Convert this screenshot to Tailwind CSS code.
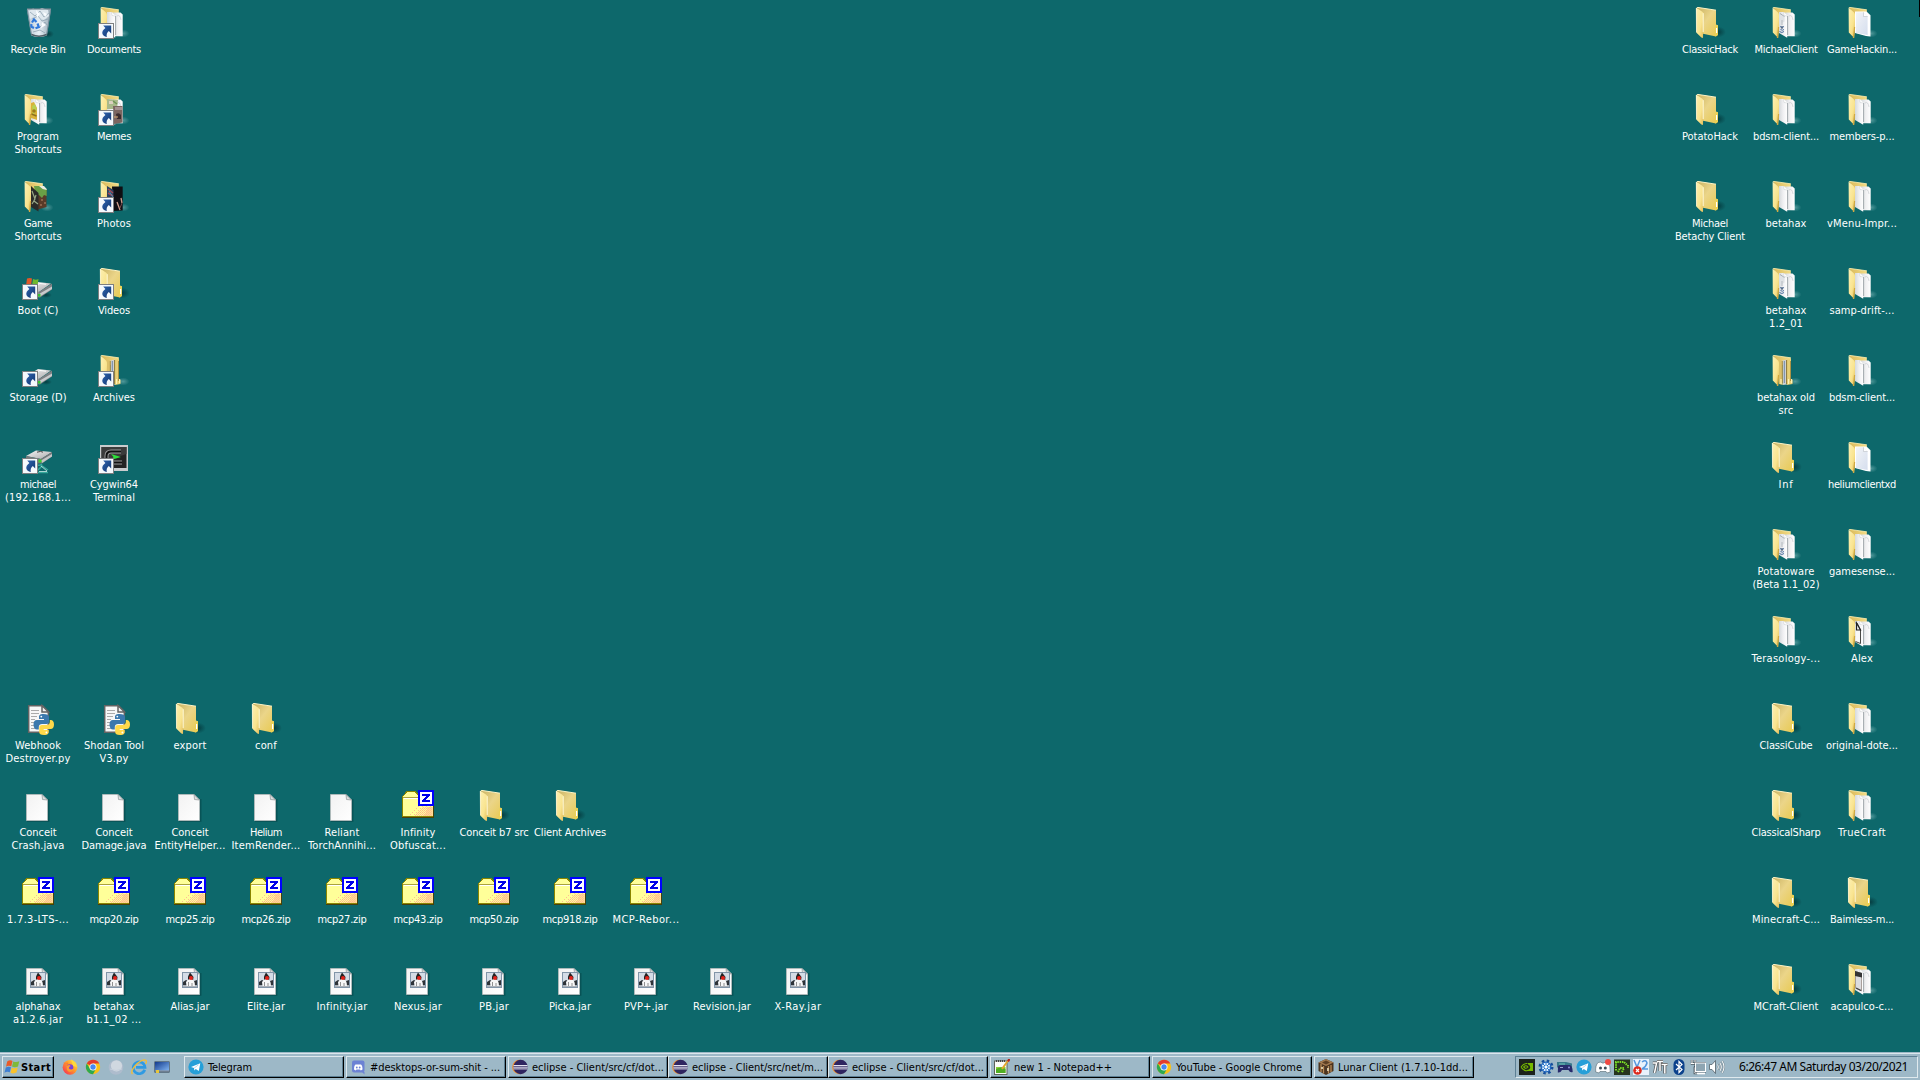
<!DOCTYPE html>
<html lang="en">
<head>
<meta charset="utf-8">
<title>Desktop</title>
<script src="https://cdn.jsdelivr.net/npm/@tailwindcss/browser@4"></script>
</head>
<body class="w-[1920px] h-[1080px] overflow-hidden bg-[#0d686b] font-['DejaVu_Sans_Condensed','DejaVu_Sans',sans-serif] text-[11px] leading-[13px] flex flex-col relative">

<svg width="0" height="0" class="absolute">
  <defs>
    <linearGradient id="gFlap" x1="0" y1="0" x2="1" y2="1"><stop offset="0" stop-color="#fdf0b4"/><stop offset=".6" stop-color="#f9e48f"/><stop offset="1" stop-color="#dfb955"/></linearGradient>
    <linearGradient id="gBack" x1="0" y1="0" x2="1" y2="1"><stop offset="0" stop-color="#c9b263"/><stop offset=".45" stop-color="#ebd589"/><stop offset="1" stop-color="#e8c94f"/></linearGradient>
    <linearGradient id="gTop" x1="0" y1="0" x2="1" y2="0"><stop offset="0" stop-color="#d9b85a"/><stop offset="1" stop-color="#f3dc86"/></linearGradient>
    <linearGradient id="gPaper" x1="0" y1="0" x2="1" y2="0"><stop offset="0" stop-color="#d5d9dc"/><stop offset=".5" stop-color="#f0f0f2"/><stop offset="1" stop-color="#ffffff"/></linearGradient>
    <linearGradient id="gBlue" x1="0" y1="0" x2="1" y2="1"><stop offset="0" stop-color="#f2f4f7"/><stop offset="1" stop-color="#d5deee"/></linearGradient>
    <linearGradient id="gDoc" x1="0" y1="0" x2="1" y2="1"><stop offset="0" stop-color="#f2f2f2"/><stop offset="1" stop-color="#ffffff"/></linearGradient>
    <radialGradient id="gShade"><stop offset="0" stop-color="#022f33" stop-opacity=".75"/><stop offset="1" stop-color="#022f33" stop-opacity="0"/></radialGradient>
    <radialGradient id="gGlow"><stop offset="0" stop-color="#7fb7b8" stop-opacity=".6"/><stop offset="1" stop-color="#7fb7b8" stop-opacity="0"/></radialGradient>
    <linearGradient id="gDrive" x1="0" y1="0" x2="1" y2="1"><stop offset="0" stop-color="#f4f4f4"/><stop offset="1" stop-color="#a9a9ab"/></linearGradient>
    <linearGradient id="gBin" x1="0" y1="0" x2="1" y2="0"><stop offset="0" stop-color="#b7c6d1"/><stop offset=".5" stop-color="#e6eff5"/><stop offset="1" stop-color="#93a6b2"/></linearGradient>
    <linearGradient id="gArrow" x1="0" y1="0" x2="1" y2="1"><stop offset="0" stop-color="#2d62ad"/><stop offset="1" stop-color="#12366f"/></linearGradient>
    <pattern id="pDither" width="2" height="2" patternUnits="userSpaceOnUse"><rect width="1" height="1" fill="#ffb78c"/><rect x="1" y="1" width="1" height="1" fill="#ffc29a"/></pattern>
    <pattern id="pDither2" width="4" height="4" patternUnits="userSpaceOnUse"><rect width="1" height="1" fill="#ffbf92"/><rect x="2" y="2" width="1" height="1" fill="#ffbf92"/></pattern>
    <linearGradient id="gFox" x1="1" y1="0" x2="0" y2="1"><stop offset="0" stop-color="#fff04a"/><stop offset=".45" stop-color="#ff9a2b"/><stop offset="1" stop-color="#f5205a"/></linearGradient>
    <linearGradient id="gScreen" x1="0" y1="0" x2="1" y2="1"><stop offset="0" stop-color="#123a8c"/><stop offset="1" stop-color="#7fb3f0"/></linearGradient>

    <symbol id="folder" viewBox="0 0 32 32">
      <ellipse cx="24" cy="25" rx="8" ry="5.5" fill="url(#gShade)"/>
      <path d="M3 0.3 L22 3.2 V17.5 L24 18.3 V28 L22 29.6 L9 26.8Z" fill="url(#gBack)"/>
      <path d="M3 0.3 L22 3.2" stroke="#fdf3c4" stroke-width="1"/>
      <path d="M21.5 18 L23.8 18.6 V28 L21 29.4Z" fill="#ecd254"/><path d="M22.6 21v5" stroke="#fff" stroke-width="1.2"/>
      <path d="M2 0.5 L8.6 5 Q9.8 6 9.6 8 L9 31 L7.4 30.6 L2.2 25.5Z" fill="url(#gFlap)"/>
      <path d="M2.3 1 L2.5 25" stroke="#fff8df" stroke-width=".8" opacity=".8"/>
      <path d="M9.2 6.2 V25" stroke="#fffbe0" stroke-width=".9"/>
    </symbol>
    <symbol id="openbase" viewBox="0 0 32 32">
      <ellipse cx="25" cy="26.5" rx="6.5" ry="4" fill="url(#gGlow)"/>
      <path d="M3 0.2 L20.8 2.7 V10 H9Z" fill="url(#gTop)"/><path d="M3 .3 L20.8 2.8" stroke="#fff0b0" stroke-width=".8"/>
    </symbol>
    <symbol id="openflap" viewBox="0 0 32 32">
      <path d="M2.6 0.5 L8 5.5 Q9.2 6.8 9 9 V20 L8.2 31 L2.8 25.5Z" fill="url(#gFlap)"/>
      <path d="M7.4 31 L8.6 20" stroke="#d3a93f" stroke-width="1.2"/>
    </symbol>
    <symbol id="papers" viewBox="0 0 32 32">
      <path d="M15 5.4 H22.5 L24.7 7.6 V29.3 H17Z" fill="url(#gPaper)"/>
      <path d="M9 5 L14 5 L17.2 8.5 V30.8 L9 26Z" fill="url(#gPaper)"/>
      <path d="M17.6 9 V28" stroke="#a3a9ad" stroke-width="1"/><path d="M13.5 5 L14 8.5 L17 9" fill="#fff" stroke="#c6cacc" stroke-width=".5"/>
      <path d="M19 9 Q22 7 23 13" stroke="#c9ccd0" stroke-width=".7" fill="none"/>
    </symbol>
    <symbol id="open" viewBox="0 0 32 32"><use href="#openbase"/><use href="#papers"/><use href="#openflap"/></symbol>
    <symbol id="openpage" viewBox="0 0 32 32"><use href="#openbase"/>
      <path d="M9 4.5 L20.5 4.5 L24.5 8.3 V29.5 L20 29 L9 26Z" fill="#fff"/><path d="M10 5.3 H17.5 L21.6 9.5 V28 L10 26Z" fill="url(#gBlue)"/><path d="M17.5 5.3 V9.5 H21.6" fill="#fff" stroke="#b8bdc4" stroke-width=".6"/>
      <use href="#openflap"/></symbol>
    <symbol id="openjava" viewBox="0 0 32 32"><use href="#openbase"/><use href="#papers"/>
      <path d="M9.5 7 l5 2.500 v5 l-5 3z" fill="#dfe2e5"/><path d="M10 6.500l4.500 3" stroke="#9aa2a8" stroke-width=".8"/><path d="M12 13v5" stroke="#aab1b8" stroke-width=".8"/><path d="M10 19.500 l2 1 l2-1 M10.500 22.500 q2 1.500 3.500 0 M9.500 24.500 q2.500 2 4.500 0" stroke="#4a6f9f" stroke-width="1" fill="none"/><path d="M12 19v3" stroke="#3d4f66" stroke-width="1"/>
      <use href="#openflap"/></symbol>
    <symbol id="openblack" viewBox="0 0 32 32"><use href="#openbase"/><use href="#papers"/>
      <path d="M9.500 7 L11 7 L14.500 14 V27.500 L9.500 25.500" fill="#f8f8f8" stroke="#4a4a46" stroke-width="1"/><path d="M10.500 7 V14 H14.500Z" fill="#eee" stroke="#222" stroke-width="1.200"/>
      <use href="#openflap"/></symbol>
    <symbol id="openphone" viewBox="0 0 32 32"><use href="#openbase"/><use href="#papers"/>
      <path d="M9.500 7.500 L15.500 9.500 V27 L9.500 24Z" fill="#dcdcdf" stroke="#8c7f78" stroke-width=".7"/><path d="M9 7 L16 9 V13.500 L9 12Z" fill="#343434"/><path d="M10 24 l5 2.500" stroke="#444" stroke-width="1.300"/>
      <use href="#openflap"/></symbol>
    <symbol id="openarch" viewBox="0 0 32 32"><use href="#openbase"/>
      <path d="M17 5 L21 4 V24 L22.500 25 V29 L17 30Z" fill="#e8cf74"/><path d="M12.500 5.500 L17 4.500 V29.500 L12.500 30Z" fill="#cfd2d0"/><path d="M14.300 6v22" stroke="#6f88a8" stroke-width="1"/><path d="M16.600 5v24" stroke="#8a7532" stroke-width="1"/>
      <path d="M9 5 L12.500 6 V30 L9 29Z" fill="#dcc06a"/><path d="M12.300 6v22M20.500 6v20" stroke="#9c8338" stroke-width=".8"/><path d="M11 24v5M18.500 24v5M21.600 24v4" stroke="#fff3b8" stroke-width="1.200"/>
      <use href="#openflap"/></symbol>
    <symbol id="openprog" viewBox="0 0 32 32"><use href="#openbase"/><use href="#papers"/>
      <path d="M9 9 L12 8 L15 14 V26 L9 24Z" fill="#d9b23a"/><path d="M10 12l3-2 2 6-4 5z" fill="#b8d052"/><circle cx="12" cy="17" r="1.800" fill="#a07b1a"/><path d="M9.500 20 l5 2" stroke="#8d7020" stroke-width="1.500"/>
      <use href="#openflap"/></symbol>
    <symbol id="opengame" viewBox="0 0 32 32"><use href="#openbase"/>
      <path d="M14 5 L24.500 8 V26 L14 29Z" fill="#5a3a28"/><path d="M12 5 L20 5 L24.700 8 V15 L22 14 L20 17 L17 14 L13 12Z" fill="#6aa046"/><path d="M19 18h2v2h-2zM22 21h2v2h-2zM18 23h2v2h-2z" fill="#8a6148"/><path d="M17 5 h5 l2.700 3 v1 l-4-1z" fill="#e8ece4"/>
      <path d="M9 5 L16.500 12 V30.500 L9 26Z" fill="#2b2b29"/><path d="M10 10 l3 8 -3 5 M14 14 l-2 6 4 3" stroke="#99a886" stroke-width="1.200" fill="none"/>
      <use href="#openflap"/></symbol>
    <symbol id="openmeme" viewBox="0 0 32 32"><use href="#openbase"/><use href="#papers"/>
      <path d="M9 5 L20 6 L19 15 L9 15Z" fill="#a8b98a"/><path d="M11 7h4v3h-4z" fill="#dcd1c0"/><path d="M15 7l4 3" stroke="#6f9454" stroke-width="1.500"/>
      <path d="M15 12 H24.500 V28.500 L16 30Z" fill="#7b6560"/><path d="M17 13h7v3h-7z" fill="#a49190"/><path d="M18 20 q3-2 5 1 v4 h-4z" fill="#3b2c2d"/><path d="M16 23h4" stroke="#d6a873"/>
      <use href="#openflap"/></symbol>
    <symbol id="openphoto" viewBox="0 0 32 32"><use href="#openbase"/>
      <path d="M14 5.500 L24.700 5.500 V29.500 L15 30Z" fill="#0f0e12"/><path d="M9 5 L15.500 9 V24 L9 22Z" fill="#28415e"/><path d="M10 8l5 4M10 12l5 3M10 17l5 2" stroke="#a24a58" stroke-width="1.500"/><path d="M11 10l4 6" stroke="#4d8fb0"/><path d="M19 21 l3 8 M23 17l1 5" stroke="#cf9d8c" stroke-width="1.300"/><path d="M22 27l2-5" stroke="#7b4a4a"/>
      <use href="#openflap"/></symbol>

    <symbol id="arrow" viewBox="0 0 32 32">
      <rect x=".5" y="16.500" width="15" height="15" fill="#f5f9fc" stroke="#7e7f80"/>
      <path d="M5.200 18.500 H13.200 V26.500 L10.800 24 C9 25.400 8.200 27.500 8.800 30 C4 29 2.300 24.500 7.400 20.900Z" fill="url(#gArrow)"/>
    </symbol>

    <symbol id="bin" viewBox="0 0 32 32">
      <ellipse cx="26" cy="27" rx="6" ry="4" fill="url(#gShade)"/>
      <path d="M5 2 L29 2 L24.800 28.500 Q17 31.500 9.300 28.500Z" fill="url(#gBin)"/>
      <path d="M7 4 L11 1.500 L15 3 L20 1 L26 3 L27 9 L22 13 L14 8 L8 12Z" fill="#dfe8ee"/>
      <path d="M8 5l5 4 5-5 4 6 5-4M10 12l6-3 4 5 6-2M18 20l5-5 2 3M11 25l7-2 5 3" stroke="#8fa3b1" stroke-width=".8" fill="none"/>
      <path d="M14 3l4 4-3 4zM20 15l4 3-5 3zM21 5l4 2-2 3z" fill="#fafdff"/>
      <path d="M5 2 H29" stroke="#75868f" stroke-width="1.200"/><path d="M5.300 3 L9.500 28 M28.600 3L24.600 28" stroke="#748c99" stroke-width="1"/>
      <path d="M9.500 27.500 Q17 31 24.600 27.500" stroke="#4d5d65" stroke-width="1.500" fill="none"/>
      <path d="M10 15.500 l2-3 2.500 2.500 M15.500 16.500 l1.300 3.500 -3.300 1.300 M12 21 l-2.500-1.300 -.3-2.500" stroke="#2f78dc" stroke-width="2.200" fill="none"/>
    </symbol>

    <symbol id="drive" viewBox="0 0 32 32">
      <ellipse cx="24" cy="27" rx="6" ry="3" fill="url(#gShade)"/>
      <path d="M5 21 L16 14 L29 15.500 L17 24Z" fill="url(#gDrive)"/>
      <path d="M17 24 L30 15.500 V21.500 L18 29.500Z" fill="#7f8184"/><path d="M17 26 L30 18.500 V21 L18 28.500Z" fill="#c9cbcd"/>
      <path d="M5 21 L17 24 L18 29.500 L5 27Z" fill="#8a8c8e"/>
      <path d="M13 17.500l5-2 6 .7" stroke="#fff" stroke-width="1" fill="none"/><rect x="16" y="26" width="2.500" height="2.500" fill="#35c82c"/>
    </symbol>
    <symbol id="bootdrive" viewBox="0 0 32 32"><use href="#drive"/>
      <path d="M5 10.500 q3-1 5 0 l-.8 6 q-2.500-1-5 0z" fill="#e2582a"/><path d="M11 11 q3 1.300 5.500 0 l-.8 5.500 q-3 1-5.500 0z" fill="#6fb82e"/><path d="M10 16h5v2h-5z" fill="#f2c12e"/>
    </symbol>
    <symbol id="netdrive" viewBox="0 0 32 32">
      <path d="M4 14 L14 8.500 L30 10 L19 17Z" fill="url(#gDrive)"/><path d="M19 17 L30 10 V14.500 L20 21.500 H4 V14Z" fill="#77797b"/><path d="M19 18.500 L30 12 V14.500 L20 21Z" fill="#c4c6c8"/>
      <path d="M15 10.200q4-1.500 6 0" stroke="#444" fill="none"/><rect x="16.500" y="17.500" width="3" height="3" fill="#3bd02c"/>
      <path d="M15 23 q3 1 5-1 M16 28 l4-4 6 4 M16 30.500 h10" stroke="#37a89c" stroke-width="1.500" fill="none"/><path d="M19 24l6 5M17 29.500 h8" stroke="#cfeee8" stroke-width=".8"/>
    </symbol>
    <symbol id="term" viewBox="0 0 32 32">
      <rect x="2" y="3" width="28" height="26" fill="#c9ccce"/><rect x="3.500" y="5" width="25" height="21" fill="#242424"/><path d="M3.500 5h25v7l-25 8z" fill="#3b3b3b"/>
      <path d="M23 9.500 H13 Q8.500 9.500 8.500 14 V16 Q8.500 20.500 13 20.500 H24" fill="none" stroke="#9b9b9b" stroke-width="4"/>
      <path d="M23 9.500 H13 Q8.500 9.500 8.500 14 V16 Q8.500 20.500 13 20.500 H24" fill="none" stroke="#111" stroke-width="2"/>
      <path d="M13 12 L23 15 L13 18 L15.500 15Z" fill="#2fe03a"/>
    </symbol>

    <symbol id="doc" viewBox="0 0 32 32">
      <path d="M5 31.200 H26.800 V9" stroke="#053f42" stroke-width="1.200" fill="none" opacity=".6"/>
      <path d="M4.500 4.500 H20 L25.500 10 V30.500 H4.500Z" fill="url(#gDoc)" stroke="#b9bdbd" stroke-width=".8"/>
      <path d="M20 4.500 L20.500 9.500 L25.500 10Z" fill="#dcdfe0" stroke="#8f9596" stroke-width=".7"/>
    </symbol>
    <symbol id="jar" viewBox="0 0 32 32"><use href="#doc"/>
      <rect x="8.500" y="8.500" width="15" height="15" fill="#d4dce6" stroke="#8195a8"/>
      <path d="M9 18l3-2 2 1v4H9z" fill="#2e3338"/><path d="M20 17l3-1v6h-3z" fill="#2e3338"/><path d="M9 21h14v2H9z" fill="#a9b0b8"/>
      <path d="M16 8.500 L19.500 13 L19 17 H14 L14 12.500Z" fill="#222"/><path d="M12 18 Q14 14.500 17 15 Q21 15.500 21 22 H12.500Z" fill="#f7f7f7"/><path d="M14.500 18v4M18 19v3" stroke="#777" stroke-width=".8"/><circle cx="17" cy="14" r="2" fill="#e3231c"/>
    </symbol>
    <symbol id="py" viewBox="0 0 32 32">
      <path d="M6.700 2.700 H20.500 L26.300 8.500 V29.300 H6.700Z" fill="#f7f7f7" stroke="#636363" stroke-width="1.500"/>
      <path d="M20 2.500V9H26.500Z" fill="#efefef" stroke="#636363" stroke-width="1.500"/>
      <path d="M9 7.500h8M9 10.500h8M9 13.500h6M9 16.500h4M9 19.500h3M9 22.500h4M9 25.500h5" stroke="#aaa" stroke-width="1"/>
      <path d="M21.500 11 C17.500 11 17 12.500 17 14 V16 H22 V17 H15 C12.500 17 11.500 19 11.500 21.500 C11.500 24.500 12.800 26.500 15 26.500 H16.800 V24 C16.800 22 18.200 21 20 21 H24.500 C26 21 27 20 27 18.500 V14 C27 12 25 11 21.500 11Z" fill="#3b78ad"/><circle cx="19.300" cy="13.600" r=".9" fill="#fff"/>
      <path d="M22 32 C26 32 26.700 30.500 26.700 29 V27 H21.700 V26 H28.500 C31 26 32 24 32 21.500 C32 18.700 30.800 17 28.700 17 H27.800 V19 C27.800 21 26.400 22 24.500 22 H20 C18.300 22 17.200 23 17.200 24.600 V29 C17.200 31 18.500 32 22 32Z" fill="#ffd94a"/><circle cx="24.400" cy="29.500" r=".9" fill="#fff"/>
    </symbol>
    <symbol id="zip" viewBox="0 0 32 32" shape-rendering="crispEdges">
      <path d="M0 6 L2 5 L4 1 H14 L17 5 H32 V28 H0Z" fill="#8a8500"/><path d="M1 6 L3 5 L5 2 H13 L16 6 H31 V26 H1Z" fill="#ffff99"/>
      <path d="M1 7H17" stroke="#a9a23e" stroke-width="1"/><path d="M2 8.500H17" stroke="#fff" stroke-width="1"/>
      <path d="M17 12 L30 12 V26 H4 L10 20Z" fill="url(#pDither2)"/><path d="M20 17 H30 V26 H12Z" fill="url(#pDither)"/><path d="M26 17 H31 V26 H22Z" fill="#ffc08c" opacity=".55"/>
      <path d="M0 27.500H32M31.500 16V28" stroke="#473f0c" stroke-width="1"/>
      <rect x="16" y="0" width="16" height="16" fill="#0000ff"/><rect x="18" y="2" width="12" height="12" fill="#fff"/>
      <path d="M20 4 H28 V6 L23.500 10 H28 V12 H20 V10 L24.500 6 H20Z" fill="#0000e8"/>
    </symbol>

    <!-- 16px taskbar icons -->
    <symbol id="flag" viewBox="0 0 16 16">
      <path d="M3.200 2.500 Q6 .5 8.500 2 L7.300 7.300 Q4.500 6 2 7.700Z" fill="#ea5b28"/><path d="M9.300 2.400 Q12 3.800 15.300 2.300 L14 7.500 Q11 9 8 7.600Z" fill="#7fb93a"/>
      <path d="M1.800 8.600 Q4.500 7 7 8.200 L5.800 13.300 Q3 12 .5 13.800Z" fill="#3f7fd2"/><path d="M7.800 8.700 Q10.500 10 13.700 8.500 L12.500 13.600 Q9.500 15.200 6.500 13.700Z" fill="#f8c22c"/>
    </symbol>
    <symbol id="firefox" viewBox="0 0 16 16"><circle cx="8" cy="8.300" r="7.400" fill="url(#gFox)"/><path d="M9 .2 Q14 3 15 8 L11 7Z" fill="#ffd93b"/><path d="M1 3 L3 5 L6 3.500 L6 6Z" fill="#ff7a2b"/><circle cx="8" cy="8.500" r="3.300" fill="#7b3fd8"/><path d="M4.500 7 Q8 5 8.500 7.300 Q7 7.500 6.800 9.200 Q9 12 12 9 Q11 13 7.500 12.800 Q4 12 4.500 7Z" fill="#ff9b2e"/></symbol>
    <symbol id="chrome" viewBox="0 0 16 16"><circle cx="8" cy="8" r="7.200" fill="#fbc116"/><path d="M8 8 L1.800 4.400 A7.200 7.200 0 0 1 14.300 4.500 H8Z" fill="#e33b2e"/><path d="M1.800 4.400 A7.200 7.200 0 0 0 8 15.200 L11 9.800 L5 9.800Z" fill="#2da94f"/><circle cx="8" cy="8" r="3.500" fill="#fff"/><circle cx="8" cy="8" r="2.700" fill="#4688f1"/></symbol>
    <symbol id="ball" viewBox="0 0 16 16"><circle cx="8" cy="8.500" r="7.300" fill="#aebccd"/><circle cx="8.500" cy="6.800" r="5.600" fill="#d0d8e0"/><path d="M2 10q6 3 12 0" stroke="#c6d0dc" fill="none"/></symbol>
    <symbol id="ie" viewBox="0 0 16 16"><path d="M13.700 10.800 A5.900 5.900 0 1 1 14 8.300 H5" fill="none" stroke="#2f9ae2" stroke-width="2.700"/><path d="M1.500 15 C-1.500 12 7 1.500 13.500 .8 C16 .8 15.800 3 14.500 5" fill="none" stroke="#f2bd35" stroke-width="1.300"/></symbol>
    <symbol id="desk" viewBox="0 0 16 16"><rect x=".5" y="2.500" width="15" height="11" fill="#26364a"/><rect x="1" y="3" width="14" height="8.500" fill="url(#gScreen)"/><path d="M1 12h14" stroke="#b7c7d8"/><rect x="2" y="11" width="3" height="3" fill="#e8c63a"/></symbol>
    <symbol id="tg" viewBox="0 0 16 16"><circle cx="8" cy="8" r="7.600" fill="#269fd8"/><path d="M3 8 L12.300 4.200 L10.800 12 L7.800 9.900 L6.300 11.400 L6 9Z" fill="#fff"/><path d="M6.200 9 L10.500 5.800" stroke="#a9cde4" stroke-width=".8"/></symbol>
    <symbol id="dc" viewBox="0 0 16 16"><rect x="2" y="1.500" width="12.500" height="12" rx="2" fill="#6c82d4"/><path d="M12 13 h2.500 v2.500z" fill="#6c82d4"/><path d="M4 10.500 Q4 6.500 5.500 5.500 H11 Q12.500 6.500 12.500 10.500 L10.800 11.500 L10 10.500 H6.500 L5.700 11.500Z" fill="#fff"/><circle cx="6.800" cy="8.500" r=".9" fill="#6c82d4"/><circle cx="9.700" cy="8.500" r=".9" fill="#6c82d4"/></symbol>
    <symbol id="ecl" viewBox="0 0 16 16"><circle cx="7.400" cy="8" r="7.200" fill="#f08a24"/><circle cx="8.600" cy="8" r="7.200" fill="#2f2560"/><path d="M1.500 6.500h14M1.300 8.200h14.500M1.500 9.900h14" stroke="#e4e2ef" stroke-width="1"/></symbol>
    <symbol id="npp" viewBox="0 0 16 16"><rect x=".5" y="2" width="12.500" height="13.500" fill="#fcfdf8" stroke="#5e655c"/><path d="M2 2 h10" stroke="#444" stroke-dasharray="1 1" stroke-width="2"/><rect x="2" y="8" width="9.500" height="6" fill="#8bd133"/><path d="M2 10q5-3 9.500 0v4H2z" fill="#4fae23"/><path d="M14.500 1 L8 10" stroke="#e2a52c" stroke-width="2"/><path d="M15.500 0 L14 2.300" stroke="#b32020" stroke-width="2.200"/></symbol>
    <symbol id="craft" viewBox="0 0 16 16"><path d="M8 0 L15.500 3.500 V12 L8 16 L.5 12 V3.500Z" fill="#4b3420"/><path d="M8 0 L15.500 3.500 L8 7 L.5 3.500Z" fill="#a37a50"/><path d="M3 5 V13 M5.500 7V14.500 M10.500 7v7.500 M13 6v7" stroke="#b88a57" stroke-width="1.300"/><path d="M4 3.500l4-2 4 2-4 2z" fill="#5e4024"/><path d="M9 9h2v3H9zM3 8h2v2H3z" fill="#d7c4a0"/></symbol>
    <symbol id="nv" viewBox="0 0 16 16"><rect width="16" height="16" fill="#1c221c"/><path d="M2 8 Q5 4 8.500 4.500 M2 8 Q5 12.500 8.500 11.500 M4.500 8 Q7 5.500 9 8 Q7 10.500 4.500 8" stroke="#76b900" stroke-width="1.100" fill="none"/><path d="M9 4h5v8H8v-1q4-1 3-3.500Q10.500 5.500 9 5.500z" fill="#76b900"/></symbol>
    <symbol id="gear" viewBox="0 0 16 16"><circle cx="8" cy="8" r="5.800" fill="none" stroke="#164f9c" stroke-width="3.400" stroke-dasharray="2.300 2.250"/><circle cx="8" cy="8" r="4.800" fill="#e8f3ff" stroke="#1d64bb" stroke-width="1.300"/><path d="M8 3.500v9M3.500 8h9M5 5l6 6M11 5l-6 6" stroke="#2272c8"/><circle cx="8" cy="8" r="1.200" fill="#fff"/></symbol>
    <symbol id="pad" viewBox="0 0 16 16"><path d="M0 3h9l6 1.500v4H0z" fill="#38798c"/><path d="M1 8 Q1 6 4 6 H12.500 Q15.500 6 15.700 13 Q13 14 11.500 11 H5 Q3.500 14 .8 13.500Z" fill="#282b6c"/><path d="M2 5h6" stroke="#72c5b8"/><circle cx="12" cy="8.500" r="1" fill="#8d91d8"/><path d="M3 8.500h3" stroke="#9ea1d0"/></symbol>
    <symbol id="dct" viewBox="0 0 16 16"><path d="M.7 13 Q.2 6 3.200 3.500 L6 3 L7 4 H9 L10 3 L13 3.500 Q15.500 7 15.300 13 L12 14 L11 12.500 H5 L4 14Z" fill="#fff" stroke="#526670" stroke-width=".6"/><circle cx="5.500" cy="9" r="1.500" fill="#3d4d59"/><circle cx="10.300" cy="9" r="1.500" fill="#3d4d59"/><circle cx="13" cy="3" r="3" fill="#f04a43"/></symbol>
    <symbol id="trm" viewBox="0 0 16 16"><rect width="16" height="16" y=".5" fill="#27351f"/><path d="M1 3h9l3 3M2 3v9M4 13l2-4h4l-2 4M14 6v3" stroke="#79dc26" stroke-width="2" stroke-dasharray="1.500 .8" fill="none"/></symbol>
    <symbol id="v2" viewBox="0 0 16 16"><rect width="16" height="16" fill="#e9f2fc"/><path d="M1 1 L4 8 L7 1 M9 3 q4-3 5 1 q-1 4-5 6 h6" stroke="#5597de" stroke-width="1.500" fill="none"/><circle cx="4.500" cy="11.500" r="4.300" fill="#dc2b1e"/><path d="M3 10l3 3M6 10l-3 3" stroke="#fff" stroke-width="1.200"/></symbol>
    <symbol id="seventt" viewBox="0 0 16 16"><path d="M.8 4 H4.600 L2.500 14 M5 2.500 H11 M8 2.500 V12 M9.500 5.500 H15.500 M12.800 5.500V14.500" stroke="#555" stroke-width="3" fill="none"/><path d="M.8 4 H4.600 L2.500 14 M5 2.500 H11 M8 2.500 V12 M9.500 5.500 H15.500 M12.800 5.500V14.500" stroke="#fff" stroke-width="1.500" fill="none"/></symbol>
    <symbol id="bt" viewBox="0 0 16 16"><rect x="2.500" width="11" height="16" rx="5.500" fill="#0b418c"/><path d="M5 5 L11 10.500 L8 13.500 V2.500 L11 5.500 L5 11" stroke="#fff" stroke-width="1.200" fill="none"/></symbol>
    <symbol id="net" viewBox="0 0 16 16"><path d="M2 1v3M5 1v3M.8 4.500h5.500v2q0 1.500-1.500 2V14h3" stroke="#4d5960" stroke-width="2.400" fill="none"/><path d="M2 1v3M5 1v3M.8 4.500h5.500v2q0 1.500-1.500 2V14h3" stroke="#fff" stroke-width="1" fill="none"/><rect x="5.500" y="4" width="10" height="8.500" fill="#8ea5b2" stroke="#44515a" stroke-width="2"/><rect x="5.500" y="4" width="10" height="8.500" fill="#8ea5b2" stroke="#fff"/><path d="M7 14.500h8" stroke="#fff" stroke-width="1.600"/></symbol>
    <symbol id="vol" viewBox="0 0 16 16"><path d="M.5 5.500h2.500l3.500-4v13l-3.500-4H.5z" fill="#fff" stroke="#526068" stroke-width=".8"/><path d="M8.500 5.500q1.500 2.500 0 5M10.800 3.700q3 4.300 0 8.600M13 2q4 6 0 12" stroke="#6a7b85" stroke-width="2" fill="none"/><path d="M8.500 5.500q1.500 2.500 0 5M10.800 3.700q3 4.300 0 8.600M13 2q4 6 0 12" stroke="#f3f8fa" stroke-width="1.100" fill="none"/></symbol>
  </defs>
</svg>

<main id="grid" class="grid grid-cols-[repeat(25,76px)] grid-rows-[repeat(12,87px)] h-[1052px] shrink-0 text-white"></main>
<i class="absolute right-0 top-0 w-px h-[17px] bg-black"></i>

<footer class="h-[28px] shrink-0 bg-[#9db8c7] pt-px">
  <div class="h-[27px] border-t border-[#dbe6ec] pt-[2px] pl-[2px] flex items-start text-black">
    <button class="w-[52px] h-[22px] flex items-center pl-[1px] gap-px border border-t-[#dfe9ee] border-l-[#dfe9ee] border-r-black border-b-black shadow-[inset_-1px_-1px_0_#5c7f93]">
      <svg class="size-4 shrink-0"><use href="#flag"/></svg><b class="whitespace-nowrap" data-font="bold 11px 'DejaVu Sans Condensed'" data-w="29">Start</b>
    </button>
    <nav id="quick" class="flex gap-[7px] pl-[8px] pt-[3px] w-[130px]"></nav>
    <div id="tasks" class="flex w-[1331px]"></div>
    <div class="w-[403px] h-[22px] border border-t-[#5c7f93] border-l-[#5c7f93] border-r-[#dfe9ee] border-b-[#dfe9ee] flex items-center pl-[3px]">
      <div id="tray" class="flex gap-[3px] w-[220px]"></div>
      <time class="whitespace-nowrap text-[12px] font-['Noto_Sans','Open_Sans',sans-serif] -translate-y-px" data-font="12px 'Noto Sans'" data-w="168">6:26:47 AM Saturday 03/20/2021</time>
    </div>
  </div>
</footer>

<script>
// tracking that brings a caption to the given width
const pen = document.createElement('canvas').getContext('2d');
const track = (text, w, font = "11px 'DejaVu Sans Condensed'") => {
  pen.font = font;
  return ((w + 1 - pen.measureText(text).width) / text.length).toFixed(3);
};

// column, row, icon, shortcut flag, then text/width pairs for each label line
const items = [
[0,0,'bin',0,'Recycle Bin',54],[1,0,'open',1,'Documents',53],
[0,1,'openprog',0,'Program',41,'Shortcuts',46],[1,1,'openmeme',1,'Memes',33],
[0,2,'opengame',0,'Game',27,'Shortcuts',46],[1,2,'openphoto',1,'Photos',33],
[0,3,'bootdrive',1,'Boot (C)',40],[1,3,'folder',1,'Videos',31],
[0,4,'drive',1,'Storage (D)',56],[1,4,'openarch',1,'Archives',41],
[0,5,'netdrive',1,'michael',35,'(192.168.1...',65],[1,5,'term',1,'Cygwin64',47,'Terminal',41],
[0,8,'py',0,'Webhook',45,'Destroyer.py',64],[1,8,'py',0,'Shodan Tool',59,'V3.py',28],[2,8,'folder',0,'export',32],[3,8,'folder',0,'conf',21],
[0,9,'doc',0,'Conceit',36,'Crash.java',52],[1,9,'doc',0,'Conceit',36,'Damage.java',64],[2,9,'doc',0,'Conceit',36,'EntityHelper...',70],[3,9,'doc',0,'Helium',31,'ItemRender...',68],[4,9,'doc',0,'Reliant',34,'TorchAnnihi...',67],[5,9,'zip',0,'Infinity',34,'Obfuscat...',55],[6,9,'folder',0,'Conceit b7 src',68],[7,9,'folder',0,'Client Archives',71],
[0,10,'zip',0,'1.7.3-LTS-...',61],[1,10,'zip',0,'mcp20.zip',48],[2,10,'zip',0,'mcp25.zip',48],[3,10,'zip',0,'mcp26.zip',48],[4,10,'zip',0,'mcp27.zip',48],[5,10,'zip',0,'mcp43.zip',48],[6,10,'zip',0,'mcp50.zip',48],[7,10,'zip',0,'mcp918.zip',54],[8,10,'zip',0,'MCP-Rebor...',66],
[0,11,'jar',0,'alphahax',44,'a1.2.6.jar',49],[1,11,'jar',0,'betahax',40,'b1.1_02 ...',54],[2,11,'jar',0,'Alias.jar',38],[3,11,'jar',0,'Elite.jar',37],[4,11,'jar',0,'Infinity.jar',50],[5,11,'jar',0,'Nexus.jar',47],[6,11,'jar',0,'PB.jar',29],[7,11,'jar',0,'Picka.jar',41],[8,11,'jar',0,'PVP+.jar',43],[9,11,'jar',0,'Revision.jar',57],[10,11,'jar',0,'X-Ray.jar',46],
[22,0,'folder',0,'ClassicHack',55],[22,1,'folder',0,'PotatoHack',55],[22,2,'folder',0,'Michael',35,'Betachy Client',69],
[23,0,'openjava',0,'MichaelClient',62],[23,1,'open',0,'bdsm-client...',65],[23,2,'open',0,'betahax',40],[23,3,'openjava',0,'betahax',40,'1.2_01',33],[23,4,'openarch',0,'betahax old',57,'src',14],[23,5,'folder',0,'Inf',14],[23,6,'openjava',0,'Potatoware',56,'(Beta 1.1_02)',66],[23,7,'open',0,'Terasology-...',68],[23,8,'folder',0,'ClassiCube',52],[23,9,'folder',0,'ClassicalSharp',68],[23,10,'folder',0,'Minecraft-C...',67],[23,11,'folder',0,'MCraft-Client',64],
[24,0,'openpage',0,'GameHackin...',69],[24,1,'open',0,'members-p...',64],[24,2,'open',0,'vMenu-Impr...',69],[24,3,'open',0,'samp-drift-...',64],[24,4,'open',0,'bdsm-client...',65],[24,5,'openpage',0,'heliumclientxd',67],[24,6,'open',0,'gamesense...',65],[24,7,'openblack',0,'Alex',21],[24,8,'open',0,'original-dote...',71],[24,9,'open',0,'TrueCraft',47],[24,10,'folder',0,'Baimless-m...',63],[24,11,'openphone',0,'acapulco-c...',62]
];
document.getElementById('grid').innerHTML = items.map(([c,r,icon,link,...t]) => {
  let lines = '';
  for (let i = 0; i < t.length; i += 2) lines += `<span class="whitespace-nowrap" style="letter-spacing:${track(t[i], t[i+1])}px">${t[i]}</span>`;
  return `<div class="flex flex-col items-center pt-[7px]" style="grid-column:${c+1};grid-row:${r+1}">
    <svg class="size-8 shrink-0 mb-[4px]"><use href="#${icon}"/>${link ? '<use href="#arrow"/>' : ''}</svg>${lines}</div>`;
}).join('');

document.getElementById('quick').innerHTML = ['firefox','chrome','ball','ie','desk'].map(n => `<svg class="size-4 shrink-0"><use href="#${n}"/></svg>`).join('');

// icon, caption, caption width, gap after the button
const tasks = [['tg','Telegram',43,2],['dc','#desktops-or-sum-shit - ...',129,2],['ecl','eclipse - Client/src/cf/dot...',131,0],['ecl','eclipse - Client/src/net/m...',130,0],['ecl','eclipse - Client/src/cf/dot...',131,2],['npp','new 1 - Notepad++',97,2],['chrome','YouTube - Google Chrome',125,2],['craft','Lunar Client (1.7.10-1dd...',129,0]];
document.getElementById('tasks').innerHTML = tasks.map(([i,t,w,g]) => `<button class="w-[160px] h-[22px] shrink-0 flex items-center pl-[3px] gap-1 border border-t-[#dfe9ee] border-l-[#dfe9ee] border-r-black border-b-black shadow-[inset_-1px_-1px_0_#5c7f93]" style="margin-right:${g}px"><svg class="size-4 shrink-0"><use href="#${i}"/></svg><span class="whitespace-nowrap" style="letter-spacing:${track(t, w)}px">${t}</span></button>`).join('');

document.getElementById('tray').innerHTML = ['nv','gear','pad','tg','dct','trm','v2','seventt','bt','net','vol'].map(n => `<svg class="size-4 shrink-0"><use href="#${n}"/></svg>`).join('');

document.querySelectorAll('[data-w]').forEach(e => {
  e.style.letterSpacing = track(e.textContent, +e.dataset.w, e.dataset.font) + 'px';
});
</script>
</body>
</html>
